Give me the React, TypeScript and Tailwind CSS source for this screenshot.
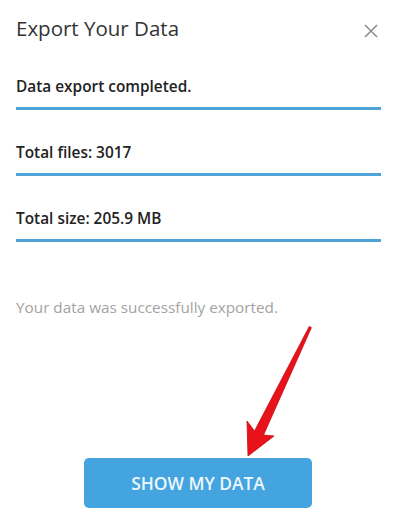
import React from "react";

function Row({ text }: { text: string }) {
  return (
    <div className="flex flex-col">
      <div className="text-[15.4px] leading-5 font-semibold text-[#222222]">{text}</div>
      <div className="mt-[10px] h-[3px] w-[365px] bg-[#4fa3d6]" />
    </div>
  );
}

export default function App() {
  return (
    <div className="relative w-[400px] h-[532px] overflow-hidden bg-white font-['Open_Sans',sans-serif]">
      <div className="flex items-start justify-between pl-4 pr-[22px] pt-[14px]">
        <div className="text-[20.5px] leading-7 text-[#333333]">Export Your Data</div>
        <svg width="14" height="14" viewBox="0 0 14 14" className="mt-[10px]">
          <path d="M1 1 L13 13 M13 1 L1 13" stroke="#8f8f8f" strokeWidth="1.6" fill="none" />
        </svg>
      </div>
      <div className="flex flex-col gap-[33px] pl-4 mt-[35px]">
        <Row text="Data export completed." />
        <Row text="Total files: 3017" />
        <Row text="Total size: 205.9 MB" />
      </div>
      <div className="pl-4 mt-[55px] text-[15.3px] leading-5 text-[#a3a3a3]">
        Your data was successfully exported.
      </div>
      <div className="ml-[84px] mt-[141px] flex h-[50px] w-[228px] items-center justify-center rounded-[5px] bg-[#44a4df] text-[17.4px] font-semibold text-[#eef7fd]">
        SHOW MY DATA
      </div>
      <svg
        className="absolute left-0 top-0 pointer-events-none"
        width="400"
        height="532"
        viewBox="0 0 400 532"
      >
        <polygon
          points="309.3,326.4 254.5,431 247,421 248,456 274,436 263.5,435 311.4,327.6"
          fill="#e8121a"
          stroke="#c40a10"
          strokeWidth="0.8"
          strokeLinejoin="round"
        />
      </svg>
    </div>
  );
}
